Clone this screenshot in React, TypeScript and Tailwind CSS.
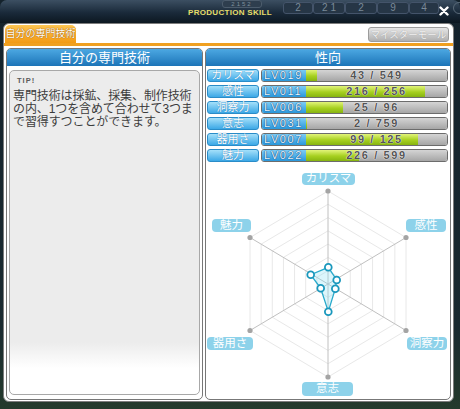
import React from "react";

const stats = [
  { name: "カリスマ", lv: "019", cur: 43, max: 549 },
  { name: "感性", lv: "011", cur: 216, max: 256 },
  { name: "洞察力", lv: "006", cur: 25, max: 96 },
  { name: "意志", lv: "031", cur: 2, max: 759 },
  { name: "器用さ", lv: "007", cur: 99, max: 125 },
  { name: "魅力", lv: "022", cur: 226, max: 599 },
];

const CX = 122;
const CY = 118;
const RX = 78;
const RY = 93;
const DIRS: [number, number][] = [
  [0, -1],
  [1, -0.5],
  [1, 0.5],
  [0, 1],
  [-1, 0.5],
  [-1, -0.5],
];
const pt = (k: number, s: number): [number, number] => [CX + DIRS[k][0] * RX * s, CY + DIRS[k][1] * RY * s];
const hex = (s: number) => DIRS.map((_, k) => pt(k, s).join(",")).join(" ");

const data: [number, number][] = [
  [122.3, 101.3],
  [130.7, 114],
  [129.3, 122.7],
  [122.3, 145.7],
  [114.7, 122.3],
  [104.7, 108.7],
];

const labels = [
  { t: "カリスマ", c: "left-[96px] top-[7px] w-[53px] h-[12px]" },
  { t: "魅力", c: "left-[6px] top-[53px] w-[39px] h-[13px]" },
  { t: "感性", c: "left-[200px] top-[53px] w-[40px] h-[13px]" },
  { t: "器用さ", c: "left-[1px] top-[171px] w-[46px] h-[13px]" },
  { t: "洞察力", c: "left-[201px] top-[171px] w-[40px] h-[13px]" },
  { t: "意志", c: "left-[96px] top-[216px] w-[51px] h-[14px]" },
];

function Radar() {
  return (
    <div className="relative h-[232px] mt-[4px]">
      <svg width="244" height="232" className="block">
        {[1, 2, 3, 4, 5, 6, 7].map((i) => (
          <polygon key={i} points={hex(i / 7)} fill="none" stroke="#e8e8e8" strokeWidth="1" />
        ))}
        {DIRS.map((_, k) => {
          const [x, y] = pt(k, 1);
          return <line key={k} x1={CX} y1={CY} x2={x} y2={y} stroke="#c0c0c0" strokeWidth="1" />;
        })}
        {DIRS.map((_, k) => {
          const [x, y] = pt(k, 1);
          return <circle key={k} cx={x} cy={y} r="2.6" fill="#a4a4a4" />;
        })}
        <polygon
          points={data.map((p) => p.join(",")).join(" ")}
          fill="rgba(140,225,245,0.3)"
          stroke="#28aacb"
          strokeWidth="1.3"
        />
        {data.map(([x, y], i) => (
          <circle key={i} cx={x} cy={y} r="3.4" fill="#ffffff" stroke="#1a98bd" strokeWidth="1.8" />
        ))}
      </svg>
      {labels.map((l) => (
        <div
          key={l.t}
          className={`absolute ${l.c} rounded-[4px] bg-[#8dd2ea] text-white text-[11.5px] leading-none flex items-center justify-center`}
        >
          {l.t}
        </div>
      ))}
    </div>
  );
}

function StatRow({ s }: { s: (typeof stats)[number] }) {
  const pct = Math.max((s.cur / s.max) * 100, 1);
  return (
    <div className="flex h-[13px] gap-[2px]">
      <div className="w-[52px] h-full rounded-[3px] border border-[#2a8cc8] bg-[linear-gradient(#a4e0fa,#3ca8e6)] text-white text-[11px] leading-none flex items-center justify-center whitespace-nowrap [text-shadow:0_0_1px_#1a6aa8]">
        {s.name}
      </div>
      <div className="w-[187px] h-full flex rounded-[3px] border border-[#6c6c6c] overflow-hidden">
        <div className="w-[44px] h-full bg-[linear-gradient(#7cccf4,#2a98dc)] text-[#eaf7ff] text-[11px] leading-none flex items-center pl-[2px] tracking-[1.6px] font-['Liberation_Sans',sans-serif] [text-shadow:0_0_1px_#0e3a70,0_0_1px_#0e3a70]">
          LV{s.lv}
        </div>
        <div className="relative flex-1 h-full bg-[linear-gradient(#d4d4d4,#a6a6a6)]">
          <div
            className="h-full bg-[linear-gradient(#e2f47a,#a6d020_55%,#86b410)]"
            style={{ width: `${pct}%` }}
          />
          <div className="absolute inset-0 flex items-center justify-center text-[11px] leading-none font-bold tracking-[1.6px] text-[#555555] font-['Liberation_Sans',sans-serif] [text-shadow:0_0_1px_#ffffff,0_0_1px_#ffffff]">
            {s.cur} / {s.max}
          </div>
        </div>
      </div>
    </div>
  );
}

export default function App() {
  const topNums = [
    { t: "2", w: "w-[30px]" },
    { t: "2 1", w: "w-[32px]" },
    { t: "2", w: "w-[32px]" },
    { t: "9", w: "w-[32px]" },
    { t: "4", w: "w-[30px]" },
  ];
  return (
    <div className="w-[460px] h-[409px] relative overflow-hidden bg-[linear-gradient(#14222c,#1a2a30_80%,#243a2c)] font-['Liberation_Sans','Noto_Sans_CJK_JP',sans-serif]">
      {/* title bar */}
      <div className="relative h-[23px] flex items-center justify-center rounded-t-[7px] bg-[linear-gradient(#3c4f62,#1a2a3a_55%,#0c1720)]">
        <div className="absolute left-[222px] top-[0px] h-[8px] w-[40px] rounded-[3px] bg-[#2e3e4e] border border-[#4c5c6c] text-[6px] leading-none text-[#7f8f9c] flex items-center justify-center tracking-[2px]">
          2152
        </div>
        <div className="absolute left-[283px] top-[2px] flex">
          {topNums.map((n, i) => (
            <div
              key={i}
              className={`${n.w} h-[12px] rounded-[3px] bg-[#263646] border border-[#44546a] text-[10px] leading-none text-[#7a8a98] flex items-center justify-center`}
            >
              {n.t}
            </div>
          ))}
        </div>
        <span className="relative text-[8px] leading-none font-bold tracking-[0.3px] text-[#e6de6a] mt-[3px]">PRODUCTION SKILL</span>
        <svg className="absolute left-[439px] top-[6px]" width="10" height="10" viewBox="0 0 10 10">
          <path d="M1.5 1.5 L8.5 8.5 M8.5 1.5 L1.5 8.5" stroke="#ffffff" strokeWidth="2.4" strokeLinecap="round" />
        </svg>
        <div className="absolute left-[453px] top-[2px] w-[12px] h-[12px] rounded-full border border-[#5a6a78]" />
      </div>

      {/* main panel */}
      <div className="ml-[3px] w-[451px] h-[379px] rounded-[6px] border border-[#7c7c7c] bg-white flex flex-col">
        {/* tab bar */}
        <div className="h-[19px] flex items-end justify-between pl-[1px] pr-[4px]">
          <div className="w-[71px] h-[18px] rounded-t-[5px] bg-[linear-gradient(#fcc552,#f29a14)] text-white text-[10px] leading-none flex items-center justify-center [text-shadow:0_0_1px_#a05a00,0_0_1px_#a05a00]">
            自分の専門技術
          </div>
          <div className="mb-[1px] w-[81px] h-[15px] rounded-[3px] border border-[#9c9c9c] bg-[linear-gradient(#e6e6e6,#b0b0b0)] text-[#f4f4f4] text-[9.5px] leading-none flex items-center justify-center [text-shadow:0_0_1px_#8a8a8a]">
            マイスターモール
          </div>
        </div>
        <div className="h-[3px] bg-[#f0a020]" />

        {/* panels */}
        <div className="flex gap-[2px] pl-[2px] pt-[2px]">
          {/* left */}
          <div className="w-[197px] h-[352px] rounded-[5px] border border-[#777777] flex flex-col">
            <div className="h-[17px] rounded-t-[4px] bg-[linear-gradient(#4ca8e2,#1c74b8)] text-white text-[13px] leading-none flex items-center justify-center">
              自分の専門技術
            </div>
            <div className="flex-1 mt-[4px] mb-[4px] mx-[2px] rounded-[5px] border border-[#a8a8a8] bg-[linear-gradient(to_bottom,#ececec_84%,#ffffff_92%)] px-[3px] pt-[6px]">
              <div className="ml-[4px] text-[7.5px] font-bold tracking-[1px] text-[#5a5a5a] leading-none">TIP!</div>
              <div className="mt-[5px] text-[12px] leading-[13.3px] text-[#3c3c3c] whitespace-nowrap tracking-[-0.1px]">
                専門技術は採鉱、採集、制作技術
                <br />
                の内、1つを含めて合わせて3つま
                <br />
                で習得すつことができます。
              </div>
            </div>
          </div>

          {/* right */}
          <div className="w-[246px] h-[352px] rounded-[5px] border border-[#777777] flex flex-col">
            <div className="h-[17px] rounded-t-[4px] bg-[linear-gradient(#4ca8e2,#1c74b8)] text-white text-[13px] leading-none flex items-center justify-center">
              性向
            </div>
            <div className="mt-[3px] pl-[1px] flex flex-col gap-[3px]">
              {stats.map((s) => (
                <StatRow key={s.name} s={s} />
              ))}
            </div>
            <Radar />
          </div>
        </div>
      </div>
    </div>
  );
}
